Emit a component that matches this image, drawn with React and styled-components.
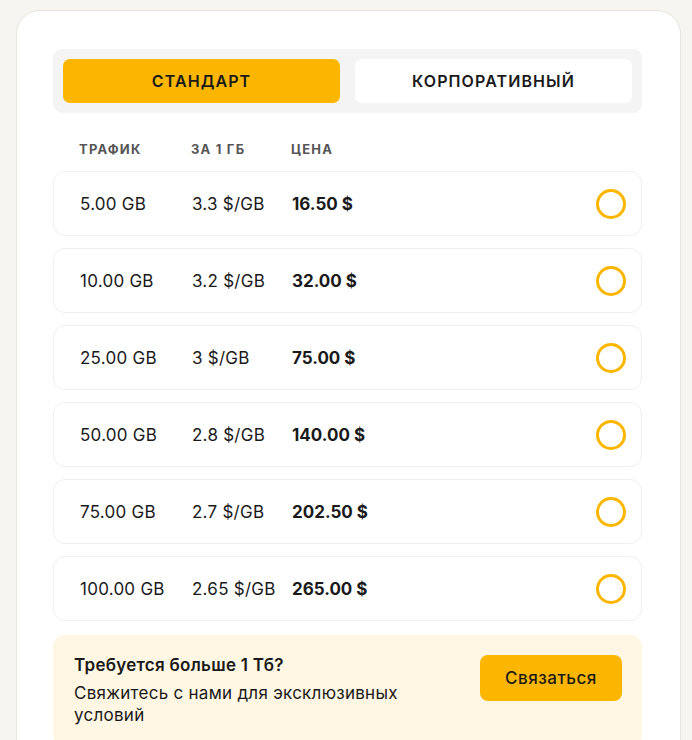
import styled, { createGlobalStyle } from 'styled-components'

const Global = createGlobalStyle`
  html, body {
    margin: 0;
    background: #f6f5f0;
    font-family: Inter, "Noto Sans", sans-serif;
    color: #1a1a1a;
  }
`

const Page = styled.div`
  padding: 10px 11px 0 16px;
  height: 740px;
  box-sizing: border-box;
  overflow: hidden;
`

const Card = styled.div`
  background: #fff;
  border: 1px solid #e6e4df;
  border-radius: 24px;
  padding: 38px 38px 0 36px;
  min-height: 800px;
`

const Tabs = styled.div`
  display: grid;
  grid-template-columns: 1fr 1fr;
  gap: 15px;
  padding: 10px;
  background: #f4f4f4;
  border-radius: 9px;
`

const Tab = styled.button`
  height: 44px;
  border: none;
  border-radius: 7px;
  background: ${p => (p.$active ? '#fcb600' : '#fff')};
  font-family: Inter, sans-serif;
  font-size: 16px;
  font-weight: 600;
  letter-spacing: 1.1px;
  color: #1a1a1a;
  text-transform: uppercase;
  cursor: pointer;
`

const Head = styled.div`
  display: grid;
  grid-template-columns: 112px 100px 1fr;
  padding: 28px 26px 14px;
  font-size: 13px;
  font-weight: 700;
  letter-spacing: 1.2px;
  color: #555;
`

const List = styled.div`
  display: flex;
  flex-direction: column;
  gap: 12px;
`

const Row = styled.div`
  display: grid;
  grid-template-columns: 112px 100px 1fr auto;
  align-items: center;
  height: 65px;
  box-sizing: border-box;
  padding: 0 15px 0 26px;
  border: 1px solid #f0efec;
  border-radius: 12px;
  font-size: 17px;
  letter-spacing: 0.25px;
`

const Price = styled.span`
  font-weight: 700;
  letter-spacing: 0;
`

const Radio = styled.span`
  width: 30px;
  height: 30px;
  box-sizing: border-box;
  border: 3px solid #fcb600;
  border-radius: 50%;
`

const Promo = styled.div`
  display: flex;
  justify-content: space-between;
  align-items: flex-start;
  margin-top: 14px;
  padding: 20px 20px 20px 21px;
  background: #fff6e3;
  border-radius: 12px;
`

const PromoText = styled.div`
  width: 350px;
  letter-spacing: 0.27px;
`

const PromoTitle = styled.div`
  font-size: 17px;
  line-height: 21px;
  font-weight: 600;
  margin-bottom: 6px;
`

const PromoSub = styled.div`
  font-size: 17px;
  line-height: 22px;
`

const Contact = styled.button`
  width: 142px;
  height: 46px;
  border: none;
  border-radius: 8px;
  background: #fcb600;
  font-family: Inter, sans-serif;
  font-size: 17px;
  font-weight: 500;
  letter-spacing: 0.5px;
  color: #1a1a1a;
  cursor: pointer;
`

const plans = [
  ['5.00 GB', '3.3 $/GB', '16.50 $'],
  ['10.00 GB', '3.2 $/GB', '32.00 $'],
  ['25.00 GB', '3 $/GB', '75.00 $'],
  ['50.00 GB', '2.8 $/GB', '140.00 $'],
  ['75.00 GB', '2.7 $/GB', '202.50 $'],
  ['100.00 GB', '2.65 $/GB', '265.00 $'],
]

export default function App() {
  return (
    <>
      <Global />
      <Page>
        <Card>
          <Tabs>
            <Tab $active>Стандарт</Tab>
            <Tab>Корпоративный</Tab>
          </Tabs>
          <Head>
            <span>ТРАФИК</span>
            <span>ЗА 1 ГБ</span>
            <span>ЦЕНА</span>
          </Head>
          <List>
            {plans.map(([gb, per, price]) => (
              <Row key={gb}>
                <span>{gb}</span>
                <span>{per}</span>
                <Price>{price}</Price>
                <Radio />
              </Row>
            ))}
          </List>
          <Promo>
            <PromoText>
              <PromoTitle>Требуется больше 1 Тб?</PromoTitle>
              <PromoSub>Свяжитесь с нами для эксклюзивных условий</PromoSub>
            </PromoText>
            <Contact>Связаться</Contact>
          </Promo>
        </Card>
      </Page>
    </>
  )
}
